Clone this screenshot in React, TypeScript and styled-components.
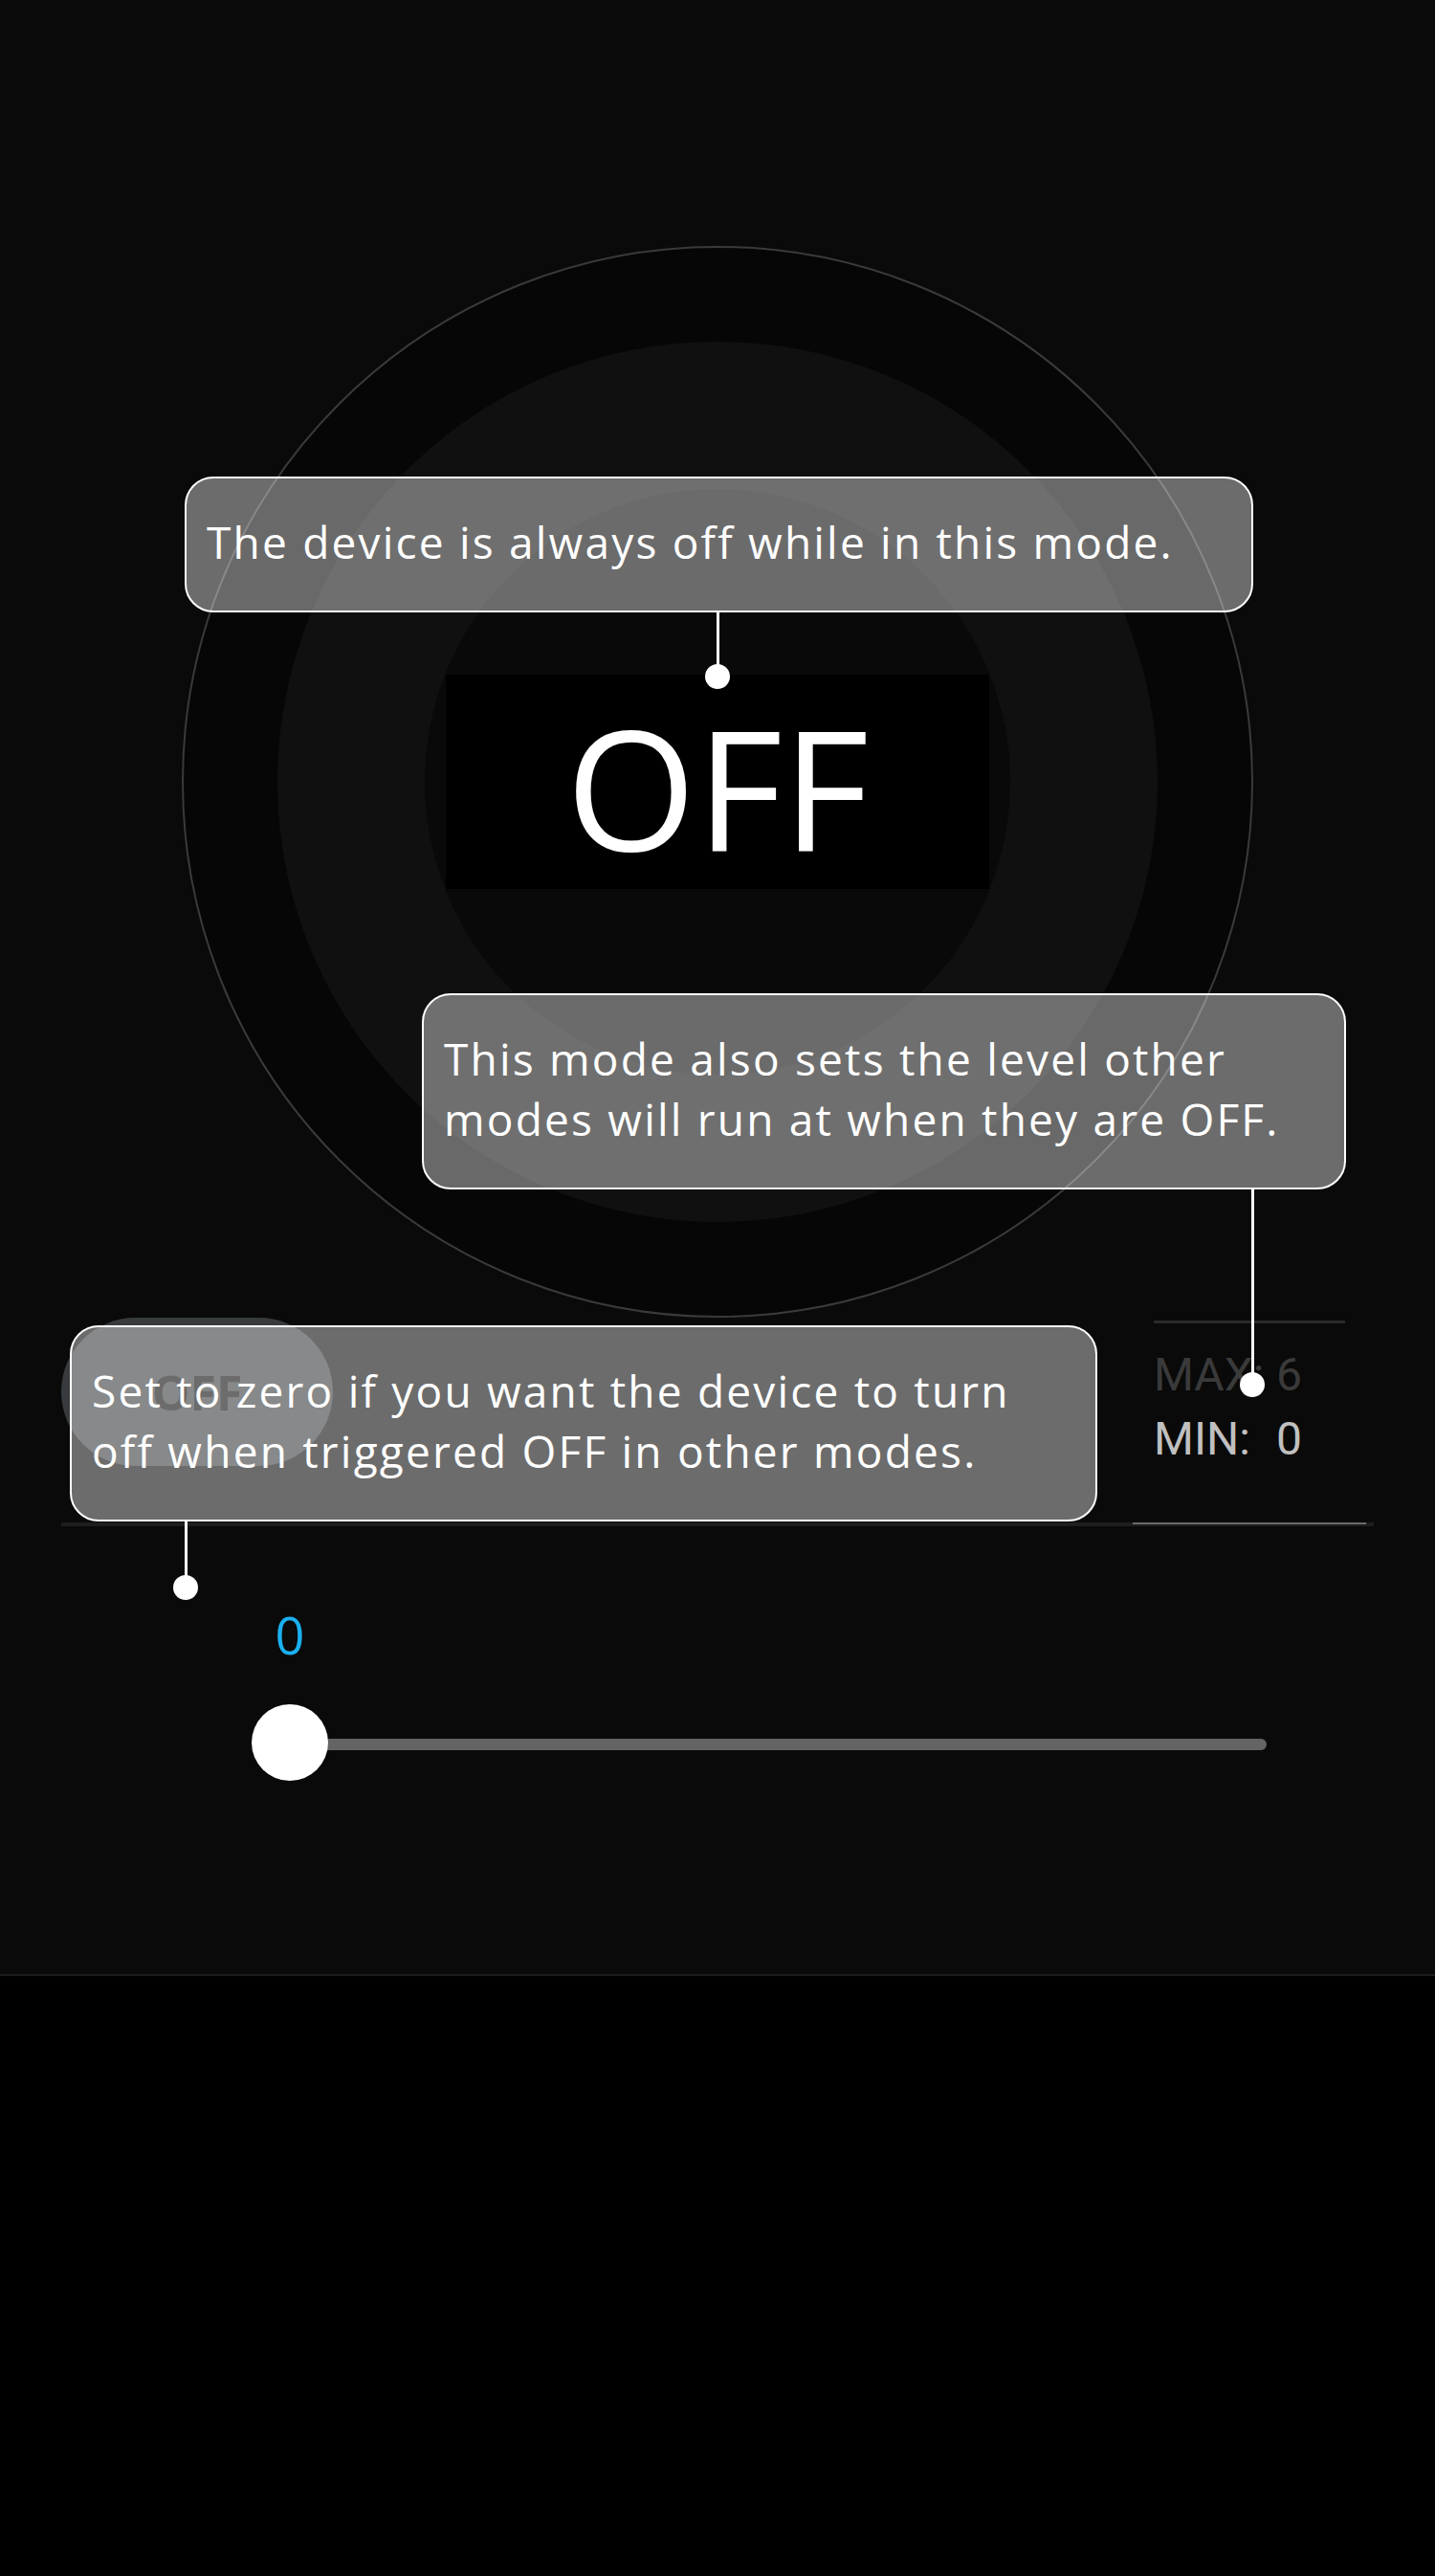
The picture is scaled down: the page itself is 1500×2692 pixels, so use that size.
import React from "react";
import styled, { createGlobalStyle } from "styled-components";

const GlobalStyle = createGlobalStyle`
  html, body { margin: 0; padding: 0; background: #000; }
  body { font-family: "Open Sans", "Noto Sans", sans-serif; }
  * { box-sizing: border-box; }
`;

const Screen = styled.main`
  position: relative;
  width: 1500px;
  height: 2065px;
  background: #0a0a0a;
  border-bottom: 2px solid #1c1c1c;
  overflow: hidden;
`;

const DialArea = styled.section`
  display: flex;
  justify-content: center;
  padding-top: 257px;
`;

const Disk = styled.div<{ $size: number; $bg: string; $ring?: string }>`
  flex-shrink: 0;
  width: ${(p) => p.$size}px;
  height: ${(p) => p.$size}px;
  border-radius: 50%;
  background: ${(p) => p.$bg};
  border: ${(p) => (p.$ring ? `2px solid ${p.$ring}` : "none")};
  display: flex;
  align-items: center;
  justify-content: center;
`;

const ModeBox = styled.div`
  width: 568px;
  height: 224px;
  padding-top: 4px;
  background: #000;
  color: #fff;
  font-size: 175px;
  line-height: 224px;
  text-align: center;
  font-weight: 400;
`;

const ControlRow = styled.section`
  display: flex;
  justify-content: space-between;
  align-items: stretch;
  height: 218px;
  margin: 0 64px;
  box-shadow: inset 0 -4px 0 #1e1e1e;
`;

const ToggleButton = styled.button`
  width: 284px;
  height: 155px;
  border: none;
  border-radius: 78px;
  background: #383b3d;
  color: #0a0a0a;
  font-family: "Open Sans", sans-serif;
  font-size: 50px;
  font-weight: 700;
  display: flex;
  align-items: center;
  justify-content: center;
  padding: 0;
`;

const RangePanel = styled.div`
  width: 244px;
  margin: 0 8px 2px 0;
  padding: 3px 0 0 22px;
  border-bottom: 2px solid #6a6a6a;
`;

const RangeInner = styled.dl`
  width: 200px;
  margin: 0;
  padding-top: 20px;
  border-top: 3px solid #2a2a2a;
  display: grid;
  grid-template-columns: 128px auto;
  font-family: Roboto, "Liberation Sans", sans-serif;
  font-size: 48px;
  line-height: 67px;
`;

const RangeLabel = styled.dt<{ $dim?: boolean }>`
  margin: 0;
  color: ${(p) => (p.$dim ? "#3a3a3a" : "#c0c0c0")};
`;

const RangeValue = styled.dd<{ $dim?: boolean }>`
  margin: 0;
  color: ${(p) => (p.$dim ? "#3a3a3a" : "#c0c0c0")};
`;

const SliderArea = styled.section`
  padding: 81px 0 0 263px;
`;

const ValueLabel = styled.div`
  width: 80px;
  text-align: center;
  color: #1ab0f0;
  font-size: 54px;
  line-height: 64px;
`;

const SliderRow = styled.div`
  display: flex;
  align-items: center;
  margin-top: 41px;
`;

const Thumb = styled.div`
  position: relative;
  z-index: 1;
  flex-shrink: 0;
  width: 80px;
  height: 80px;
  border-radius: 50%;
  background: #fff;
`;

const Track = styled.div`
  width: 1021px;
  height: 12px;
  margin: 4px 0 0 -40px;
  border-radius: 0 6px 6px 0;
  background: #646464;
`;

const Tip = styled.div<{ $x: number; $y: number; $w: number }>`
  position: absolute;
  left: ${(p) => p.$x}px;
  top: ${(p) => p.$y}px;
  width: ${(p) => p.$w}px;
  padding: 35px 21px 40px;
  border: 2px solid #fff;
  border-radius: 30px;
  background: rgba(255, 255, 255, 0.4);
  color: #fff;
  font-size: 46px;
  letter-spacing: 2.2px;
  line-height: 63px;
  white-space: nowrap;
`;

const Pointer = styled.span<{ $offset: number; $length: number }>`
  position: absolute;
  top: 100%;
  margin-top: 2px;
  left: ${(p) => p.$offset - 2 - 1.5}px;
  width: 3px;
  height: ${(p) => p.$length}px;
  background: #fff;
  &::after {
    content: "";
    position: absolute;
    left: 50%;
    bottom: -13px;
    width: 26px;
    height: 26px;
    margin-left: -13px;
    border-radius: 50%;
    background: #fff;
  }
`;

export default function App() {
  return (
    <>
      <GlobalStyle />
      <Screen>
        <DialArea>
          <Disk $size={1120} $bg="#060606" $ring="#3a3a3a">
            <Disk $size={920} $bg="#101010">
              <Disk $size={612} $bg="#090909">
                <ModeBox>OFF</ModeBox>
              </Disk>
            </Disk>
          </Disk>
        </DialArea>

        <ControlRow>
          <ToggleButton>OFF</ToggleButton>
          <RangePanel>
            <RangeInner>
              <RangeLabel $dim>MAX:</RangeLabel>
              <RangeValue $dim>6</RangeValue>
              <RangeLabel>MIN:</RangeLabel>
              <RangeValue>0</RangeValue>
            </RangeInner>
          </RangePanel>
        </ControlRow>

        <SliderArea>
          <ValueLabel>0</ValueLabel>
          <SliderRow>
            <Thumb />
            <Track />
          </SliderRow>
        </SliderArea>

        <Tip $x={193} $y={498} $w={1117}>
          The device is always off while in this mode.
          <Pointer $offset={557} $length={67} />
        </Tip>
        <Tip $x={441} $y={1038} $w={966}>
          This mode also sets the level other
          <br />
          modes will run at when they are OFF.
          <Pointer $offset={868} $length={204} />
        </Tip>
        <Tip $x={73} $y={1385} $w={1074}>
          Set to zero if you want the device to turn
          <br />
          off when triggered OFF in other modes.
          <Pointer $offset={121} $length={69} />
        </Tip>
      </Screen>
    </>
  );
}
